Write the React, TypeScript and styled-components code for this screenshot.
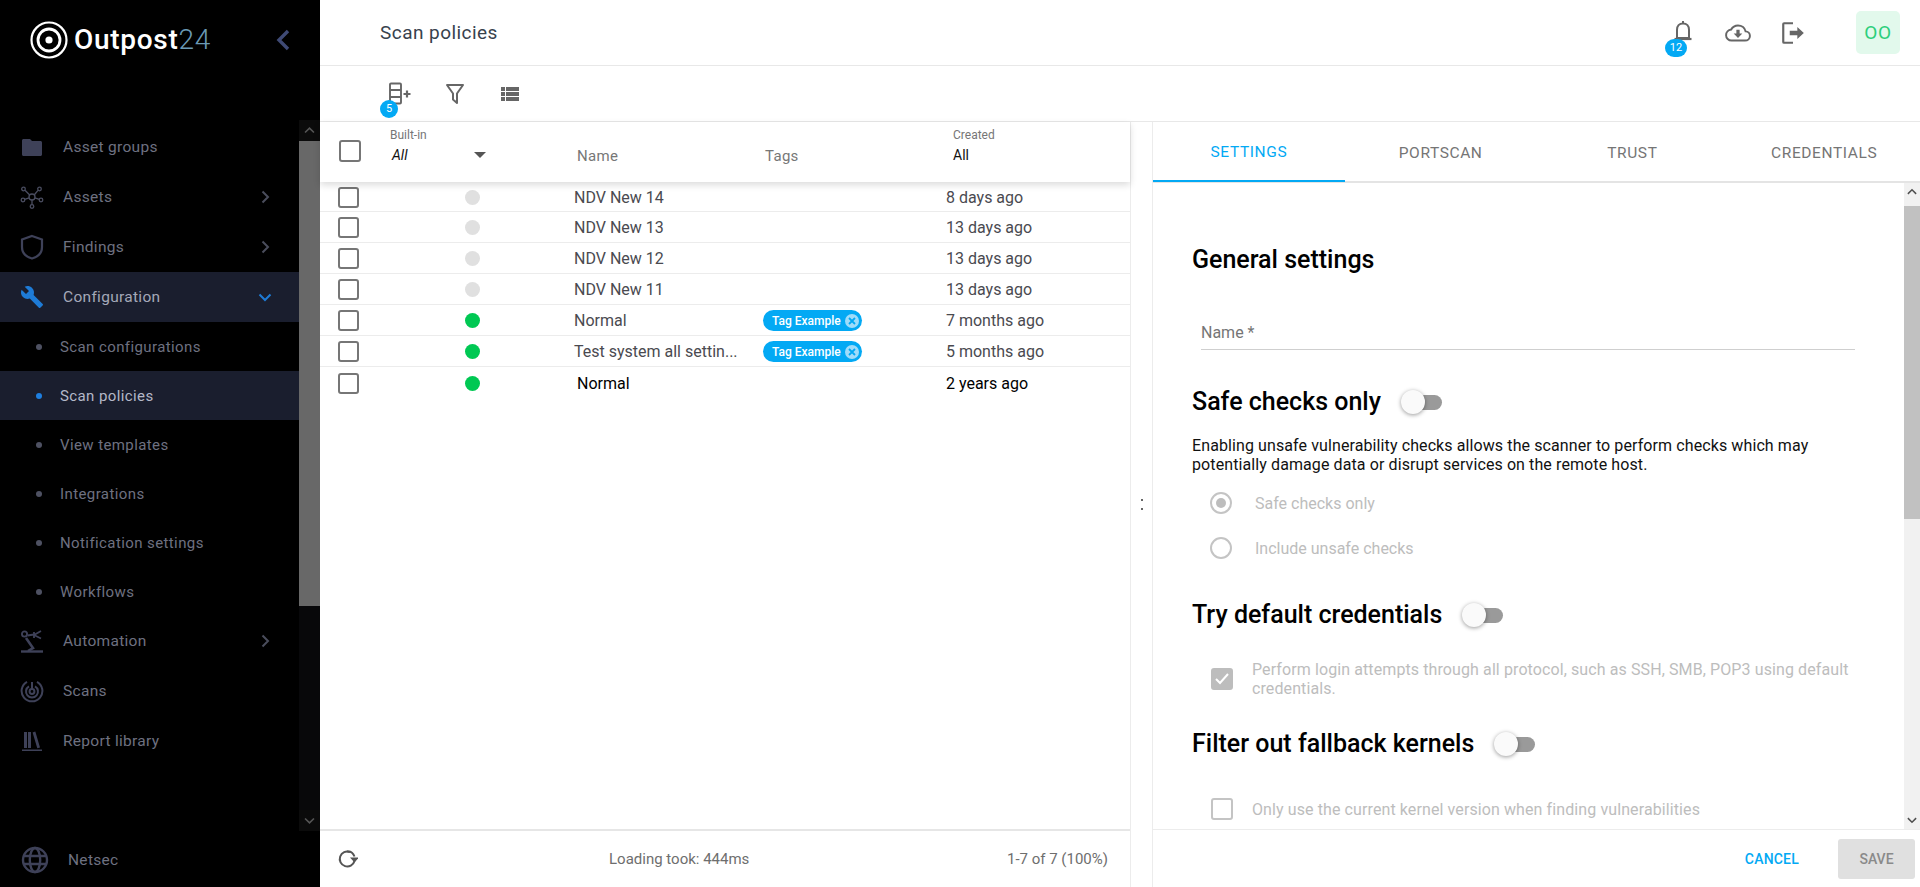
import React from "react";
import styled, { createGlobalStyle } from "styled-components";

const Global = createGlobalStyle`
  html, body { margin: 0; padding: 0; height: 100%; background: #fff; }
  body { font-family: Roboto, "Liberation Sans", sans-serif; overflow: hidden; }
  * { box-sizing: border-box; }
`;

const Page = styled.div`display: flex; width: 1920px; height: 887px; overflow: hidden;`;

/* Sidebar */
const Sidebar = styled.aside`width: 320px; flex: none; background: #000; display: flex; flex-direction: column;`;
const LogoBar = styled.div`height: 120px; flex: none; display: flex; align-items: flex-start; padding: 21px 0 0 30px;`;
const LogoText = styled.div`font-size: 28px; line-height: 38px; font-weight: 500; color: #fff; margin-left: 6px; letter-spacing: 0.7px;`;
const LogoNum = styled.span`color: #6b9ab5; font-weight: 300;`;
const Collapse = styled.div`margin-left: 65px; margin-top: 8px; display: flex;`;
const NavArea = styled.div`flex: 1; display: flex; min-height: 0;`;
const NavList = styled.nav`flex: 1; min-width: 0; padding-top: 2px; overflow: hidden;`;
const NavItem = styled.div<{ $active?: boolean }>`
  height: 50px;
  display: flex; align-items: center; padding-left: 20px; padding-right: 26px;
  background: ${p => (p.$active ? "#1a1e2e" : "transparent")};
  color: ${p => (p.$active ? "#a4a8b8" : "#6e7180")};
  font-size: 15.5px; letter-spacing: 0.3px;
`;
const NavIcon = styled.div`width: 24px; height: 24px; margin-right: 19px; flex: none; display: flex; align-items: center; justify-content: center;`;
const NavLabel = styled.span`flex: 1;`;
const SubItem = styled.div<{ $active?: boolean }>`
  height: 49px; display: flex; align-items: center; padding-left: 36px;
  background: ${p => (p.$active ? "#1a1e2e" : "transparent")};
  color: ${p => (p.$active ? "#b4b8c8" : "#6e7180")};
  font-size: 15px; letter-spacing: 0.4px;
`;
const SubDot = styled.i<{ $active?: boolean }>`
  width: 6px; height: 6px; border-radius: 50%; margin-right: 18px; flex: none;
  background: ${p => (p.$active ? "#1e7fe0" : "#4e5162")};
`;
const ScrollTrack = styled.div`width: 21px; flex: none; display: flex; flex-direction: column; background: #08080a;`;
const ScrollBtn = styled.div`height: 21px; flex: none; display: flex; align-items: center; justify-content: center; background: #0b0b0b;`;
const ScrollThumb = styled.div`height: 465px; flex: none; background: #686868;`;
const ScrollRest = styled.div`flex: 1;`;
const NetFoot = styled.div`height: 56px; flex: none; display: flex; align-items: center; padding: 2px 0 0 21px; color: #6e7180; font-size: 15.5px; letter-spacing: 0.3px;`;
const NetIcon = styled.div`width: 28px; height: 28px; margin-right: 19px; display: flex;`;

/* Main */
const Main = styled.main`flex: 1; min-width: 0; display: flex; flex-direction: column;`;
const TopBar = styled.header`height: 66px; flex: none; display: flex; align-items: center; padding: 0 20px 0 60px; border-bottom: 1px solid #e8e8e8;`;
const Title = styled.h1`margin: 0; flex: 1; font-weight: 400; font-size: 19px; letter-spacing: 0.45px; color: #37424d;`;
const TopIcon = styled.div`position: relative; width: 28px; height: 28px; margin-right: 27px; display: flex; align-items: center; justify-content: center;`;
const CountBadge = styled.span<{ $wide?: boolean }>`
  position: absolute; border-radius: 9px; background: #03a9f4; color: #fff; height: 18px;
  width: ${p => (p.$wide ? 22 : 18)}px; font-size: 11px; line-height: 18px; text-align: center;
`;
const BellBadge = styled(CountBadge)`left: -4px; top: 20px;`;
const ColBadge = styled(CountBadge)`left: -6px; top: 20px;`;
const Avatar = styled.div`margin-left: 22px; width: 44px; height: 43px; border-radius: 5px; background: #e2f9ec; color: #2ccf7c; font-size: 19px; letter-spacing: 0.6px; display: flex; align-items: center; justify-content: center;`;
const Toolbar = styled.div`height: 56px; flex: none; display: flex; align-items: center; padding-left: 66px; border-bottom: 1px solid #e8e8e8; gap: 27px;`;
const ToolIcon = styled.div`position: relative; width: 28px; height: 28px; display: flex; align-items: center; justify-content: center;`;
const Split = styled.div`flex: 1; min-height: 0; display: flex;`;

/* List panel */
const ListPanel = styled.section`width: 811px; flex: none; display: flex; flex-direction: column; border-right: 1px solid #ececec;`;
const GridCols = "18px 127px 109px 189px 183px 1fr";
const HeadRow = styled.div`
  height: 60px; flex: none; display: grid; grid-template-columns: 70px 187px 188px 188px 1fr;
  align-items: stretch; box-shadow: 0 3px 7px rgba(0,0,0,0.14); position: relative; background: #fff;
`;
const HeadCheck = styled.div`display: flex; align-items: center; padding: 0 0 2px 19px;`;
const Check = styled.span<{ $h?: boolean }>`
  width: ${p => (p.$h ? 22 : 21)}px; height: ${p => (p.$h ? 22 : 21)}px; border: 2px solid #767676; border-radius: 3px; display: block; background: #fff;
`;
const FilterCol = styled.div`padding: 6px 0 0 0; display: flex; flex-direction: column;`;
const FilterLabel = styled.span`font-size: 12px; line-height: 14px; color: #767676;`;
const FilterValueRow = styled.div`display: flex; align-items: center; height: 24px; margin-top: 1px;`;
const FilterValue = styled.span<{ $italic?: boolean }>`
  font-size: 14px; color: #111; font-style: ${p => (p.$italic ? "italic" : "normal")};
  padding-left: ${p => (p.$italic ? 2 : 0)}px; flex: 1;
`;
const Caret = styled.i`width: 0; height: 0; border-left: 6px solid transparent; border-right: 6px solid transparent; border-top: 6px solid #555; margin-right: 91px;`;
const HeadLabel = styled.div`font-size: 15px; color: #777; padding-top: 25px; line-height: 18px; letter-spacing: 0.3px;`;
const Rows = styled.div`flex: 1; min-height: 0;`;
const Row = styled.div<{ $first?: boolean; $last?: boolean }>`
  height: ${p => (p.$first ? 30 : 31)}px; display: grid; grid-template-columns: ${GridCols};
  align-items: center; padding-top: 1px;
  border-bottom: ${p => (p.$last ? "none" : "1px solid #ececec")};
  color: ${p => (p.$last ? "#000" : "#4a4a50")};
  font-size: 16px;
`;
const RowCheck = styled.div`grid-column: 2;`;
const Dot = styled.i<{ $on?: boolean }>`display: block; width: 15px; height: 15px; border-radius: 50%; background: ${p => (p.$on ? "#00c853" : "#e0e0e0")};`;
const DotCell = styled.div``;
const NameCell = styled.div<{ $last?: boolean }>`padding-left: ${p => (p.$last ? 3 : 0)}px; white-space: nowrap;`;
const TagPill = styled.span`
  display: inline-flex; align-items: center; gap: 3px; height: 21px; padding: 0 2px 0 9px; border-radius: 11px;
  background: #03a9f4; color: #fff; font-size: 12px; font-weight: 500;
`;
const TagX = styled.span`width: 16px; height: 16px; display: flex;`;
const ListFoot = styled.div`
  height: 58px; flex: none; border-top: 2px solid #e6e6e6; display: grid; grid-template-columns: 273px auto 1fr;
  align-items: center; padding: 0 22px 0 16px; font-size: 15px; color: #6e6e6e;
`;
const RightText = styled.span`text-align: right;`;
const Refresh = styled.div`display: flex;`;
const Splitter = styled.div`width: 21px; flex: none; display: flex; align-items: center; justify-content: center;`;
const SplitDots = styled.span`width: 2px; height: 11px; border-top: 2px dotted #666; border-bottom: 2px dotted #666;`;

/* Detail panel */
const Detail = styled.section`flex: 1; min-width: 0; display: flex; flex-direction: column; border-left: 1px solid #ececec;`;
const Tabs = styled.div`height: 61px; flex: none; display: grid; grid-template-columns: repeat(4, 1fr); border-bottom: 2px solid #e4e4e4;`;
const Tab = styled.div<{ $active?: boolean }>`
  display: flex; align-items: center; justify-content: center; height: 60px; padding-top: 2px; font-size: 15.5px; letter-spacing: 0.6px;
  color: ${p => (p.$active ? "#03a9f4" : "#757575")};
  border-bottom: ${p => (p.$active ? "2px solid #03a9f4" : "none")};
`;
const Body = styled.div`flex: 1; min-height: 0; display: flex;`;
const Form = styled.div`flex: 1; min-width: 0; padding: 0 46px 0 39px; overflow: hidden;`;
const H2 = styled.h2<{ $top: number }>`
  margin: ${p => p.$top}px 0 0; font-size: 25px; line-height: 30px; font-weight: 500; color: #000; display: flex; align-items: center;
`;
const NameField = styled.div`margin: 45px 0 0 9px; padding-top: 3px; border-bottom: 1px solid #cfcfcf; height: 30px; width: 654px; color: #757575; font-size: 16px; line-height: 20px;`;
const Switch = styled.span`position: relative; display: inline-block; width: 40px; height: 15px; background: #9a9a9a; border-radius: 8px; margin-left: 21px;`;
const Knob = styled.i`position: absolute; left: -1px; top: -5px; width: 24px; height: 24px; border-radius: 50%; background: #fafafa; box-shadow: 0 1px 4px rgba(0,0,0,0.4);`;
const Desc = styled.p`margin: 19px 0 0; font-size: 16px; letter-spacing: 0.1px; line-height: 19px; color: #111;`;
const RadioRow = styled.div<{ $top: number }>`display: flex; align-items: center; margin: ${p => p.$top}px 0 0 18px; color: #bdbdbd; font-size: 16px; height: 24px;`;
const Radio = styled.i<{ $on?: boolean }>`
  width: 22px; height: 22px; border-radius: 50%; border: 2px solid #c4c4c4; margin-right: 23px; display: flex; align-items: center; justify-content: center;
  &::after { content: ""; width: 10px; height: 10px; border-radius: 50%; background: ${p => (p.$on ? "#bdbdbd" : "transparent")}; }
`;
const CheckRow = styled.div<{ $top: number }>`display: flex; align-items: center; margin: ${p => p.$top}px 0 0 19px; color: #bdbdbd; font-size: 16px; letter-spacing: 0.1px; line-height: 19px;`;
const DisabledBox = styled.i<{ $on?: boolean }>`
  width: 22px; height: 22px; flex: none; margin-right: 19px; border-radius: 3px; display: flex; align-items: center; justify-content: center;
  background: ${p => (p.$on ? "#bdbdbd" : "#fff")};
  border: 2px solid ${p => (p.$on ? "#bdbdbd" : "#c4c4c4")};
`;
const VScroll = styled.div`width: 16px; flex: none; display: flex; flex-direction: column; background: #f1f1f1;`;
const VBtn = styled.div`height: 18px; flex: none; display: flex; align-items: center; justify-content: center;`;
const VThumb = styled.div`height: 313px; margin-top: 5px; flex: none; background: #c1c1c1;`;
const VRest = styled.div`flex: 1;`;
const DetailFoot = styled.div`height: 58px; flex: none; border-top: 1px solid #ececec; display: flex; align-items: center; justify-content: flex-end; padding-right: 5px;`;
const Cancel = styled.span`color: #03a9f4; font-size: 14px; font-weight: 500; margin-right: 39px; letter-spacing: 0.2px;`;
const Save = styled.span`width: 77px; height: 40px; border-radius: 3px; background: #e0e0e0; color: #8a8a8a; font-size: 14px; font-weight: 500; display: flex; align-items: center; justify-content: center;`;

const Chev = ({ dir = "right", color = "#4a4d5c", size = 16 }: { dir?: string; color?: string; size?: number }) => {
  const rot = dir === "right" ? 0 : dir === "down" ? 90 : dir === "up" ? -90 : 180;
  return <svg width={size} height={size} viewBox="0 0 16 16" style={{ transform: `rotate(${rot}deg)` }}><path d="M5.5 2.5 L11 8 L5.5 13.5" fill="none" stroke={color} strokeWidth="2" /></svg>;
};

const c = "#3e4158";
const Folder = () => <svg width="24" height="24" viewBox="0 0 24 24"><path fill={c} d="M10 4H3.5C2.7 4 2 4.7 2 5.5v14C2 20.3 2.7 21 3.5 21h17c.8 0 1.5-.7 1.5-1.500v-12C22 6.700 21.300 6 20.500 6H12l-2-2z" /></svg>;
const Hub = () => (
  <svg width="26" height="26" viewBox="0 0 24 24" fill="none" stroke="#4a4d60" strokeWidth="1.3">
    <circle cx="12" cy="12" r="3" /><circle cx="3.5" cy="4" r="1.8" /><circle cx="19.5" cy="4" r="1.8" /><circle cx="3" cy="15" r="1.8" /><circle cx="21" cy="15" r="1.8" /><circle cx="12" cy="21.5" r="1.8" />
    <path d="M5 5.2l4.7 4.8M18 5.4l-3.8 4.6M4.6 14.4l4.6-1.5M19.3 14.4l-4.5-1.5M12 15v4.8" />
  </svg>
);
const Shield = () => <svg width="24" height="26" viewBox="0 0 24 26"><path fill="none" stroke="#3e4158" strokeWidth="2.2" d="M12 2 L22 5.5 V13 C22 19 17.5 23 12 24.5 C6.5 23 2 19 2 13 V5.5 Z" /></svg>;
const Wrench = () => <svg width="26" height="26" viewBox="0 0 24 24"><path fill="#1e7bd6" d="M22.7 19l-9.1-9.1c.9-2.3.4-5-1.5-6.9-2-2-5-2.4-7.4-1.3L9 6 6 9 1.6 4.7C.4 7.1.9 10.1 2.9 12.1c1.9 1.9 4.6 2.4 6.9 1.5l9.1 9.1c.4.4 1 .4 1.4 0l2.3-2.3c.5-.4.5-1.1.1-1.4z" /></svg>;
const Robot = () => (
  <svg width="24" height="24" viewBox="0 0 24 24" fill="none" stroke="#3e4158" strokeWidth="2">
    <path d="M1 22.5h22" strokeWidth="2.4" /><path d="M8 22 L13 19 L6 9" strokeWidth="2.6" /><circle cx="4.5" cy="5" r="2.6" strokeWidth="1.8" />
    <path d="M7.5 6.5 L14 5.5M14 3 V9M14 6l7-4M14 6l7 3.5" strokeWidth="1.8" />
  </svg>
);
const Radar = () => (
  <svg width="24" height="24" viewBox="0 0 24 24" fill="none" stroke="#3e4158" strokeWidth="2">
    <path d="M7 2.8A10.4 10.4 0 1 0 17 2.8" /><path d="M9 7.3a6 6 0 1 0 6 0" /><circle cx="12" cy="12.5" r="2.4" /><path d="M12 11V3" />
  </svg>
);
const Library = () => (
  <svg width="22" height="22" viewBox="0 0 22 22"><path fill="#3e4158" d="M3 2h3v16H3zM7 2h3v16H7zM11.6 2.4l2.7-.8L19 17.4l-2.7.8zM1 19.5h20V21H1z" /></svg>
);
const Globe = () => (
  <svg width="28" height="28" viewBox="0 0 28 28" fill="none" stroke="#3e4158" strokeWidth="2.4">
    <circle cx="14" cy="14" r="12" /><ellipse cx="14" cy="14" rx="5.2" ry="12" /><path d="M3 10h22M3 18h22" />
  </svg>
);
const Logo = () => (
  <svg width="38" height="38" viewBox="0 0 38 38" fill="none" stroke="#fff">
    <circle cx="19" cy="19" r="17.5" strokeWidth="2.2" /><circle cx="19" cy="19" r="11" strokeWidth="2.8" /><circle cx="19" cy="19" r="3.6" fill="#fff" strokeWidth="0" />
  </svg>
);
const g = "#666";
const Bell = () => <svg width="24" height="26" viewBox="0 0 24 26" fill="none" stroke={g} strokeWidth="2"><path d="M12 3.5c-3.8 0-6 2.6-6 6.2V18H18V9.7c0-3.6-2.2-6.2-6-6.2z" /><path d="M3.5 19h17" strokeWidth="2.2" /><path d="M12 1v2.5" /></svg>;
const Cloud = () => <svg width="26" height="26" viewBox="0 0 24 24"><path fill="none" stroke={g} strokeWidth="1.8" d="M19 10.5C18.4 7.4 15.5 5 12 5 9.2 5 6.9 6.5 5.7 8.8 3 9.2 1 11.4 1 14c0 2.8 2.3 5 5 5h12.5c2.5 0 4.5-2 4.5-4.3 0-2.3-1.8-4.1-4-4.2z" /><path fill={g} d="M10.5 9h3v3.5h2.5L12 16.5 8 12.5h2.5z" /></svg>;
const Logout = () => <svg width="26" height="26" viewBox="0 0 24 24" fill="none"><path stroke={g} strokeWidth="2" d="M12 3H3.8C3.2 3 3 3.3 3 3.8v16.4c0 .5.2.8.8.8H12" /><path fill={g} d="M9 10h7V6.5L22 12l-6 5.500V14H9z" /></svg>;
const ColPlus = () => <svg width="24" height="24" viewBox="0 0 24 24" fill="none" stroke={g} strokeWidth="1.9"><rect x="2" y="1.5" width="11" height="20" rx="1" /><path d="M2 8h11M2 15h11" /><path d="M15.5 12h7M19 8.5v7" strokeWidth="2.2" /></svg>;
const Funnel = () => <svg width="20" height="22" viewBox="0 0 20 22" fill="none" stroke={g} strokeWidth="2"><path d="M2 2h16L12 10.5V20L8 16.5V10.5z" strokeLinejoin="round" /></svg>;
const ListIcon = () => <svg width="20" height="16" viewBox="0 0 20 16"><path fill={g} d="M1 1h4v4H1zM6 1h13v4H6zM1 6h4v4H1zM6 6h13v4H6zM1 11h4v4H1zM6 11h13v4H6z" /></svg>;
const RefreshIcon = () => <svg width="22" height="22" viewBox="0 0 22 22" fill="none"><path stroke="#555" strokeWidth="2" d="M14 4A7.5 7.5 0 1 0 18.5 13" /><path stroke="#555" strokeWidth="2" d="M11 3.5c3-.5 6 1 7.5 5" /><path fill="#555" d="M14 9.5h9l-4.5 5z" /></svg>;
const XIcon = () => <svg width="16" height="16" viewBox="0 0 16 16"><circle cx="8" cy="8" r="7" fill="#9fdcfa" /><path d="M5 5l6 6M11 5l-6 6" stroke="#03a9f4" strokeWidth="1.8" /></svg>;

const rows = [
  { n: "NDV New 14", on: false, d: "8 days ago" },
  { n: "NDV New 13", on: false, d: "13 days ago" },
  { n: "NDV New 12", on: false, d: "13 days ago" },
  { n: "NDV New 11", on: false, d: "13 days ago" },
  { n: "Normal", on: true, d: "7 months ago", tag: true },
  { n: "Test system all settin...", on: true, d: "5 months ago", tag: true },
  { n: "Normal", on: true, d: "2 years ago" },
];

const subs = ["Scan configurations", "Scan policies", "View templates", "Integrations", "Notification settings", "Workflows"];

export default function App() {
  return (
    <Page>
      <Global />
      <Sidebar>
        <LogoBar>
          <Logo />
          <LogoText>Outpost<LogoNum>24</LogoNum></LogoText>
          <Collapse>
            <svg width="14" height="22" viewBox="0 0 14 22"><path d="M12 2 L3 11 L12 20" fill="none" stroke="#3f4a75" strokeWidth="3.4" /></svg>
          </Collapse>
        </LogoBar>
        <NavArea>
          <NavList>
            <NavItem><NavIcon><Folder /></NavIcon><NavLabel>Asset groups</NavLabel></NavItem>
            <NavItem><NavIcon><Hub /></NavIcon><NavLabel>Assets</NavLabel><Chev /></NavItem>
            <NavItem><NavIcon><Shield /></NavIcon><NavLabel>Findings</NavLabel><Chev /></NavItem>
            <NavItem $active><NavIcon><Wrench /></NavIcon><NavLabel>Configuration</NavLabel><Chev dir="down" color="#1e7bd6" /></NavItem>
            {subs.map(s => (
              <SubItem key={s} $active={s === "Scan policies"}><SubDot $active={s === "Scan policies"} />{s}</SubItem>
            ))}
            <NavItem><NavIcon><Robot /></NavIcon><NavLabel>Automation</NavLabel><Chev /></NavItem>
            <NavItem><NavIcon><Radar /></NavIcon><NavLabel>Scans</NavLabel></NavItem>
            <NavItem><NavIcon><Library /></NavIcon><NavLabel>Report library</NavLabel></NavItem>
          </NavList>
          <ScrollTrack>
            <ScrollBtn><Chev dir="up" color="#555" size={13} /></ScrollBtn>
            <ScrollThumb />
            <ScrollRest />
            <ScrollBtn><Chev dir="down" color="#555" size={13} /></ScrollBtn>
          </ScrollTrack>
        </NavArea>
        <NetFoot><NetIcon><Globe /></NetIcon>Netsec</NetFoot>
      </Sidebar>
      <Main>
        <TopBar>
          <Title>Scan policies</Title>
          <TopIcon><Bell /><BellBadge $wide>12</BellBadge></TopIcon>
          <TopIcon><Cloud /></TopIcon>
          <TopIcon><Logout /></TopIcon>
          <Avatar>OO</Avatar>
        </TopBar>
        <Toolbar>
          <ToolIcon><ColPlus /><ColBadge>5</ColBadge></ToolIcon>
          <ToolIcon><Funnel /></ToolIcon>
          <ToolIcon><ListIcon /></ToolIcon>
        </Toolbar>
        <Split>
          <ListPanel>
            <HeadRow>
              <HeadCheck><Check $h /></HeadCheck>
              <FilterCol>
                <FilterLabel>Built-in</FilterLabel>
                <FilterValueRow><FilterValue $italic>All</FilterValue><Caret /></FilterValueRow>
              </FilterCol>
              <HeadLabel>Name</HeadLabel>
              <HeadLabel>Tags</HeadLabel>
              <FilterCol>
                <FilterLabel>Created</FilterLabel>
                <FilterValueRow><FilterValue>All</FilterValue></FilterValueRow>
              </FilterCol>
            </HeadRow>
            <Rows>
              {rows.map((r, i) => (
                <Row key={i} $first={i === 0} $last={i === rows.length - 1}>
                  <RowCheck><Check /></RowCheck>
                  <DotCell><Dot $on={r.on} /></DotCell>
                  <NameCell $last={i === rows.length - 1}>{r.n}</NameCell>
                  <div>{r.tag && <TagPill>Tag Example<TagX><XIcon /></TagX></TagPill>}</div>
                  <div>{r.d}</div>
                </Row>
              ))}
            </Rows>
            <ListFoot>
              <Refresh><RefreshIcon /></Refresh>
              <span>Loading took: 444ms</span>
              <RightText>1-7 of 7 (100%)</RightText>
            </ListFoot>
          </ListPanel>
          <Splitter><SplitDots /></Splitter>
          <Detail>
            <Tabs>
              <Tab $active>SETTINGS</Tab>
              <Tab>PORTSCAN</Tab>
              <Tab>TRUST</Tab>
              <Tab>CREDENTIALS</Tab>
            </Tabs>
            <Body>
              <Form>
                <H2 $top={62}>General settings</H2>
                <NameField>Name *</NameField>
                <H2 $top={37}>Safe checks only<Switch><Knob /></Switch></H2>
                <Desc>Enabling unsafe vulnerability checks allows the scanner to perform checks which may potentially damage data or disrupt services on the remote host.</Desc>
                <RadioRow $top={17}><Radio $on />Safe checks only</RadioRow>
                <RadioRow $top={21}><Radio />Include unsafe checks</RadioRow>
                <H2 $top={40}>Try default credentials<Switch><Knob /></Switch></H2>
                <CheckRow $top={30}>
                  <DisabledBox $on><svg width="16" height="16" viewBox="0 0 16 16"><path d="M2 8l4 4 8-9" fill="none" stroke="#fff" strokeWidth="2" /></svg></DisabledBox>
                  Perform login attempts through all protocol, such as SSH, SMB, POP3 using default credentials.
                </CheckRow>
                <H2 $top={31}>Filter out fallback kernels<Switch><Knob /></Switch></H2>
                <CheckRow $top={39}><DisabledBox />Only use the current kernel version when finding vulnerabilities</CheckRow>
              </Form>
              <VScroll>
                <VBtn><Chev dir="up" color="#505050" size={12} /></VBtn>
                <VThumb />
                <VRest />
                <VBtn><Chev dir="down" color="#505050" size={12} /></VBtn>
              </VScroll>
            </Body>
            <DetailFoot><Cancel>CANCEL</Cancel><Save>SAVE</Save></DetailFoot>
          </Detail>
        </Split>
      </Main>
    </Page>
  );
}
